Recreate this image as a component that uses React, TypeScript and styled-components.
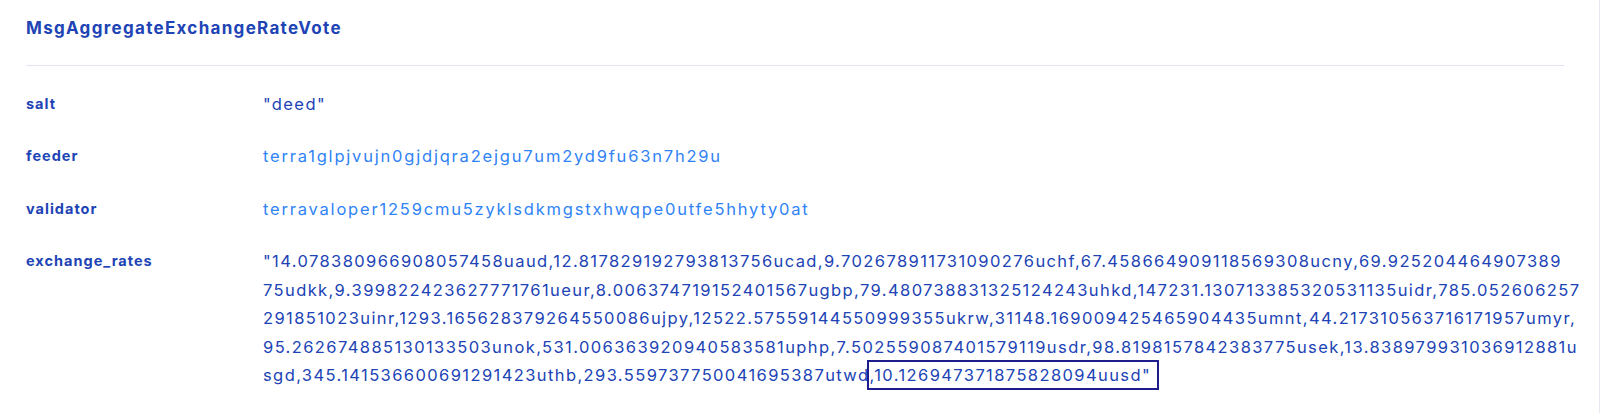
import React from "react";
import styled, { createGlobalStyle } from "styled-components";

const GlobalStyle = createGlobalStyle`
  html, body {
    margin: 0;
    padding: 0;
    background: #ffffff;
  }
  body {
    font-family: Inter, "Noto Sans", sans-serif;
    -webkit-font-smoothing: antialiased;
  }
`;

const Card = styled.section`
  box-sizing: border-box;
  width: 1600px;
  min-height: 413px;
  padding: 0 35px 0 26px;
  border-right: 1px solid #e6e8f4;
  background: #fff;
`;

const Header = styled.header`
  box-sizing: border-box;
  height: 66px;
  padding-top: 18px;
  border-bottom: 1px solid #e1e4f4;
`;

const Title = styled.h2`
  margin: 0;
  font-size: 17px;
  line-height: 20px;
  font-weight: 700;
  letter-spacing: 1.3px;
  color: #2043b5;
`;

const Rows = styled.div`
  display: flex;
  flex-direction: column;
  gap: 24px;
  padding-top: 23.5px;
`;

const Row = styled.div`
  display: grid;
  grid-template-columns: 237px 1fr;
  align-items: start;
`;

const Label = styled.div`
  font-size: 14.5px;
  line-height: 28.5px;
  font-weight: 700;
  letter-spacing: 1px;
  color: #2043b5;
`;

const Value = styled.div<{ $link?: boolean }>`
  font-size: 16.5px;
  line-height: 28.5px;
  font-weight: 400;
  letter-spacing: ${(p) => (p.$link ? "1.8px" : "1.4px")};
  color: ${(p) => (p.$link ? "#2f83f5" : "#2043b5")};
`;

const Line = styled.span`
  display: block;
  white-space: nowrap;
`;

const Highlight = styled.span`
  outline: 2px solid #1e1b8c;
  padding: 3px 6px 3px 0;
`;

const rateLines = [
  '"14.078380966908057458uaud,12.817829192793813756ucad,9.702678911731090276uchf,67.458664909118569308ucny,69.925204464907389',
  "75udkk,9.399822423627771761ueur,8.006374719152401567ugbp,79.480738831325124243uhkd,147231.130713385320531135uidr,785.052606257",
  "291851023uinr,1293.165628379264550086ujpy,12522.57559144550999355ukrw,31148.169009425465904435umnt,44.217310563716171957umyr,",
  "95.262674885130133503unok,531.006363920940583581uphp,7.502559087401579119usdr,98.8198157842383775usek,13.838979931036912881u",
  "sgd,345.141536600691291423uthb,293.559737750041695387utwd",
];
const last = ',10.126947371875828094uusd"';

export default function App() {
  return (
    <>
      <GlobalStyle />
      <Card>
        <Header>
          <Title>MsgAggregateExchangeRateVote</Title>
        </Header>
        <Rows>
          <Row>
            <Label>salt</Label>
            <Value>"deed"</Value>
          </Row>
          <Row>
            <Label>feeder</Label>
            <Value $link>terra1glpjvujn0gjdjqra2ejgu7um2yd9fu63n7h29u</Value>
          </Row>
          <Row>
            <Label>validator</Label>
            <Value $link>terravaloper1259cmu5zyklsdkmgstxhwqpe0utfe5hhyty0at</Value>
          </Row>
          <Row>
            <Label>exchange_rates</Label>
            <Value>
              {rateLines.map((line, i) =>
                i === rateLines.length - 1 ? (
                  <Line key={i}>
                    {line}
                    <Highlight>{last}</Highlight>
                  </Line>
                ) : (
                  <Line key={i}>{line}</Line>
                )
              )}
            </Value>
          </Row>
        </Rows>
      </Card>
    </>
  );
}
